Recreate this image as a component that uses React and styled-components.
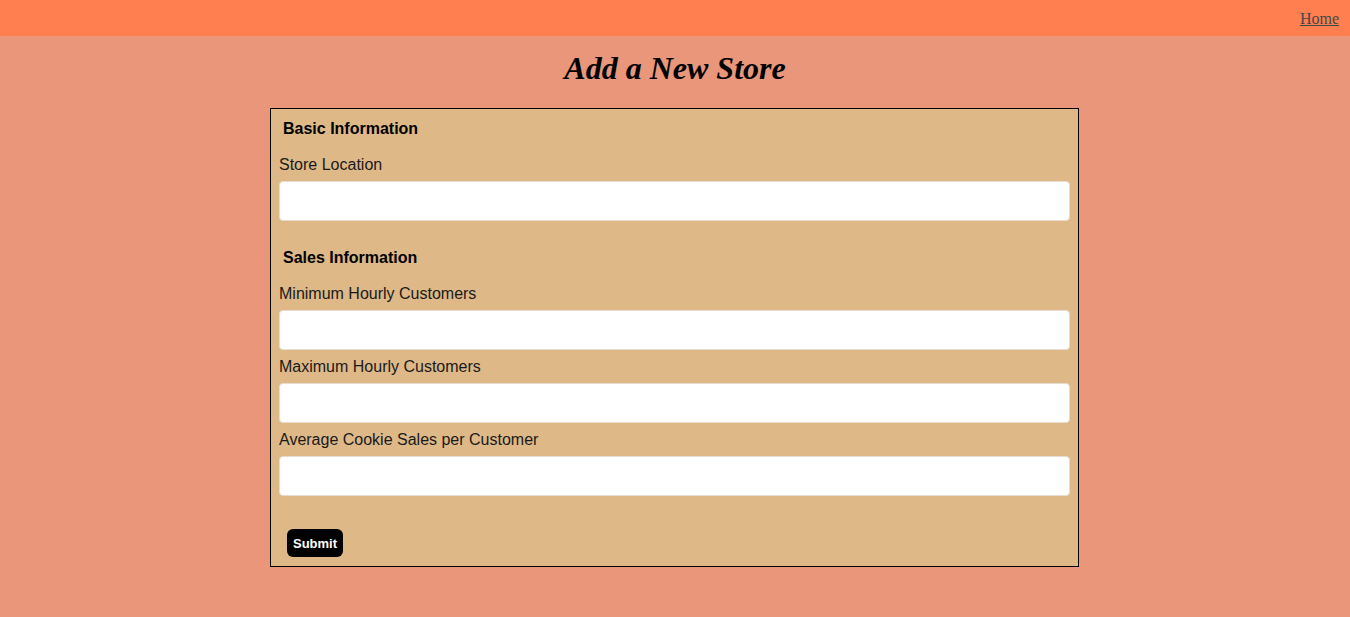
import React from "react";
import styled, { createGlobalStyle } from "styled-components";

const GlobalStyle = createGlobalStyle`
  html, body {
    margin: 0;
    padding: 0;
    background-color: #e9967a;
    font-family: "Liberation Serif", "Times New Roman", serif;
  }
  * {
    box-sizing: border-box;
  }
`;

const App = () => {
  return (
    <>
      <GlobalStyle />
      <Page.Header>
        <Page.NavLink href="#">Home</Page.NavLink>
      </Page.Header>
      <Page.Main>
        <Page.Title>Add a New Store</Page.Title>
        <Form.Wrapper onSubmit={(e) => e.preventDefault()}>
          <Form.Heading>Basic Information</Form.Heading>
          <Form.Label first htmlFor="location">
            Store Location
          </Form.Label>
          <Form.Input id="location" type="text" />

          <Form.Heading spaced>Sales Information</Form.Heading>
          <Form.Label first htmlFor="min">
            Minimum Hourly Customers
          </Form.Label>
          <Form.Input id="min" type="number" />
          <Form.Label htmlFor="max">Maximum Hourly Customers</Form.Label>
          <Form.Input id="max" type="number" />
          <Form.Label htmlFor="avg">Average Cookie Sales per Customer</Form.Label>
          <Form.Input id="avg" type="number" />

          <Form.Submit type="submit">Submit</Form.Submit>
        </Form.Wrapper>
      </Page.Main>
    </>
  );
};

const Page = {
  Header: styled.header`
    height: 36px;
    background-color: #ff7f50;
    display: flex;
    justify-content: flex-end;
    align-items: flex-start;
    padding: 10px 11px 0 0;
  `,
  NavLink: styled.a`
    font-family: "Liberation Serif", "Times New Roman", serif;
    font-size: 16px;
    color: #3f4a48;
    text-decoration: underline;
  `,
  Main: styled.main`
    display: flex;
    flex-direction: column;
    align-items: center;
    padding-top: 12px;
  `,
  Title: styled.h1`
    margin: 0 0 20px;
    font-family: "Liberation Serif", "Times New Roman", serif;
    font-style: italic;
    font-weight: 700;
    font-size: 32px;
    line-height: 40px;
    color: #000;
  `,
};

const Form = {
  Wrapper: styled.form`
    width: 809px;
    margin-right: 1px;
    display: flex;
    flex-direction: column;
    align-items: stretch;
    padding: 10px 8px 9px;
    background-color: #deb887;
    border: 1px solid #000;
    font-family: "Liberation Sans", Arial, sans-serif;
  `,
  Heading: styled.h3`
    margin: ${({ spaced }) => (spaced ? "27px" : "0")} 0 0 4px;
    font-size: 16px;
    line-height: 19px;
    font-weight: 700;
    color: #000;
  `,
  Label: styled.label`
    display: block;
    margin: ${({ first }) => (first ? "18px" : "8px")} 0 7px;
    font-size: 16px;
    line-height: 18px;
    color: #1a1a1a;
  `,
  Input: styled.input`
    width: 100%;
    height: 40px;
    margin: 0;
    padding: 0 10px;
    background-color: #fff;
    border: 1px solid #e6ddd0;
    border-radius: 4px;
    font-size: 16px;
  `,
  Submit: styled.button`
    align-self: flex-start;
    margin: 33px 0 0 8px;
    height: 28px;
    padding: 0 6px;
    background-color: #000;
    color: #fff;
    border: none;
    border-radius: 6px;
    font-family: "Liberation Sans", Arial, sans-serif;
    font-size: 13px;
    font-weight: 700;
  `,
};

export default App;
